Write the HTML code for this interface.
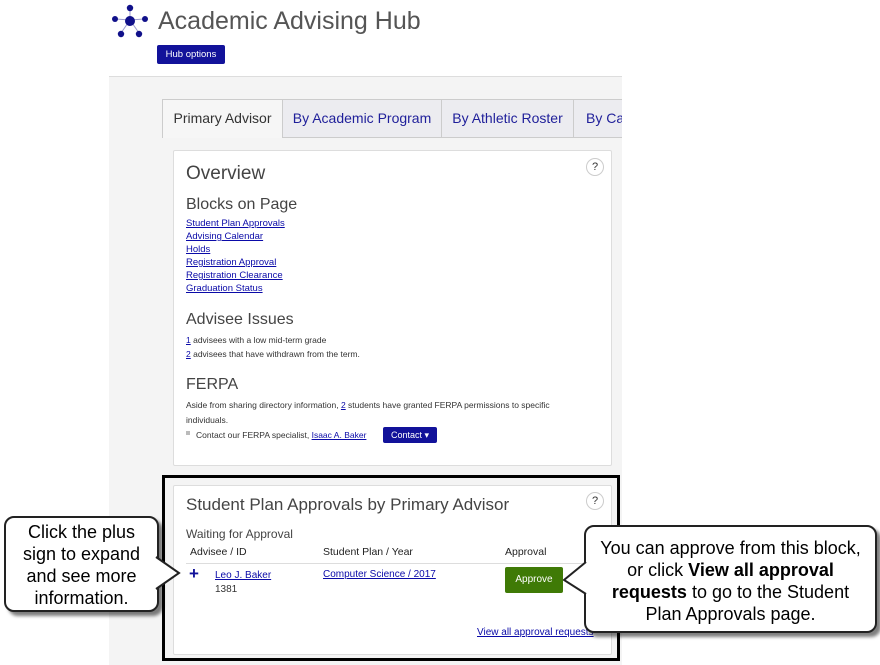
<!DOCTYPE html>
<html><head><meta charset="utf-8"><style>
*{margin:0;padding:0;box-sizing:border-box}
body{width:880px;height:665px;background:#fff;position:relative;overflow:hidden;font-family:"Liberation Sans",sans-serif;color:#333}
.a{position:absolute}
a{color:#0a0aa8;text-decoration:underline}
.t{font-size:9.5px;line-height:13px}
.h{font-weight:300;color:#444}
.q{width:18px;height:18px;border:1px solid #ccc;border-radius:50%;font-size:11px;text-align:center;line-height:16px;color:#333}
.tab{position:absolute;top:99px;height:39px;border:1px solid #ccc;background:#ececf0;font-size:14px;color:#1f1f9a;line-height:37px;text-align:center;overflow:hidden;white-space:nowrap}
.call{position:absolute;background:#fff;border:2px solid #222;border-radius:10px;box-shadow:4px 4px 3px rgba(0,0,0,.5);font-family:"Liberation Sans Narrow","Liberation Sans",sans-serif;font-size:18px;line-height:22px;text-align:center;color:#000}
</style></head><body>
<svg class="a" style="left:111px;top:4px" width="38" height="36" viewBox="0 0 38 36">
<g stroke="#9a9ad0" stroke-width="1"><line x1="19" y1="16" x2="19" y2="3"/><line x1="19" y1="16" x2="5" y2="15"/><line x1="19" y1="16" x2="33" y2="15"/><line x1="19" y1="16" x2="10" y2="29"/><line x1="19" y1="16" x2="28" y2="29"/></g>
<g fill="#10108a"><circle cx="19" cy="4" r="3.2"/><circle cx="4" cy="15" r="3"/><circle cx="34" cy="15" r="3"/><circle cx="10" cy="30" r="3.2"/><circle cx="28" cy="30" r="3.2"/><circle cx="19" cy="17" r="5"/></g></svg>
<div class="a" style="left:158px;top:7px;font-size:25px;color:#555;font-weight:300">Academic Advising Hub</div>
<div class="a" style="left:157px;top:45px;width:68px;height:19px;background:#12129a;border-radius:2px;color:#fff;font-size:9.5px;line-height:19px;text-align:center">Hub options</div>
<div class="a" style="left:109px;top:76px;width:513px;height:589px;background:#f4f4f4;border-top:1px solid #ddd"></div>
<div class="tab" style="left:162px;width:121px;background:#f6f6f6;color:#333;border-bottom:none;z-index:2">Primary Advisor</div>
<div class="tab" style="left:282px;width:160px">By Academic Program</div>
<div class="tab" style="left:441px;width:133px">By Athletic Roster</div>
<div class="tab" style="left:573px;width:49px;border-right:none;text-align:left;padding-left:12px">By Campus</div>
<div class="a" style="left:173px;top:150px;width:439px;height:316px;background:#fff;border:1px solid #ddd;border-radius:2px"></div>
<div class="a q" style="left:586px;top:158px">?</div>
<div class="a h" style="left:186px;top:163px;font-size:19px">Overview</div>
<div class="a h" style="left:186px;top:196px;font-size:16px">Blocks on Page</div>
<div class="a t" style="left:186px;top:217px"><a>Student Plan Approvals</a><br><a>Advising Calendar</a><br><a>Holds</a><br><a>Registration Approval</a><br><a>Registration Clearance</a><br><a>Graduation Status</a></div>
<div class="a h" style="left:186px;top:311px;font-size:16px">Advisee Issues</div>
<div class="a t" style="left:186px;top:333px;font-size:8.5px;line-height:14px"><a>1</a> advisees with a low mid-term grade<br><a>2</a> advisees that have withdrawn from the term.</div>
<div class="a h" style="left:186px;top:376px;font-size:16px">FERPA</div>
<div class="a t" style="left:186px;top:398px;font-size:8.5px;line-height:15px">Aside from sharing directory information, <a>2</a> students have granted FERPA permissions to specific<br>individuals.</div>
<div class="a" style="left:186px;top:431px;width:4px;height:4px;background:#bbb"></div>
<div class="a t" style="left:196px;top:429px;font-size:8.5px">Contact our FERPA specialist, <a>Isaac A. Baker</a></div>
<div class="a" style="left:383px;top:427px;width:54px;height:16px;background:#12129a;border-radius:2px;color:#fff;font-size:9px;line-height:16px;text-align:center">Contact ▾</div>
<div class="a" style="left:162px;top:475px;width:458px;height:186px;border:3px solid #000"></div>
<div class="a" style="left:173px;top:485px;width:439px;height:170px;background:#fff;border:1px solid #ddd;border-radius:2px"></div>
<div class="a q" style="left:586px;top:492px">?</div>
<div class="a h" style="left:186px;top:495px;font-size:17px">Student Plan Approvals by Primary Advisor</div>
<div class="a" style="left:186px;top:527px;font-size:12px;color:#444">Waiting for Approval</div>
<div class="a" style="left:190px;top:546px;font-size:10.5px;color:#222">Advisee / ID</div>
<div class="a" style="left:323px;top:546px;font-size:10.5px;color:#222">Student Plan / Year</div>
<div class="a" style="left:505px;top:546px;font-size:10.5px;color:#222">Approval</div>
<div class="a" style="left:186px;top:563px;width:415px;height:1px;background:#ddd"></div>
<div class="a" style="left:189px;top:564px;font-size:17px;font-weight:bold;color:#12129a">+</div>
<div class="a" style="left:215px;top:569px;font-size:10px;line-height:14px"><a>Leo J. Baker</a><br>1381</div>
<div class="a" style="left:323px;top:569px;font-size:10px"><a>Computer Science / 2017</a></div>
<div class="a" style="left:505px;top:567px;width:58px;height:26px;background:#3f7a06;border-radius:2px;color:#fff;font-size:10px;line-height:26px;text-align:center">Approve</div>
<div class="a" style="left:477px;top:627px;font-size:10px"><a>View all approval requests</a></div>
<div class="call" style="left:4px;top:516px;width:155px;height:96px;padding-top:3px">Click the plus<br>sign to expand<br>and see more<br>information.</div>
<svg class="a" style="left:155px;top:555px" width="26" height="36"><path d="M1 2 L24 18 L1 34" fill="#fff" stroke="#222" stroke-width="2"/></svg>
<div class="call" style="left:584px;top:525px;width:293px;height:108px;padding-top:10px">You can approve from this block,<br>or click <b>View all approval<br>requests</b> to go to the Student<br>Plan Approvals page.</div>
<svg class="a" style="left:563px;top:560px" width="24" height="36"><path d="M23 2 L1 20 L23 34" fill="#fff" stroke="#222" stroke-width="2"/></svg>
</body></html>
